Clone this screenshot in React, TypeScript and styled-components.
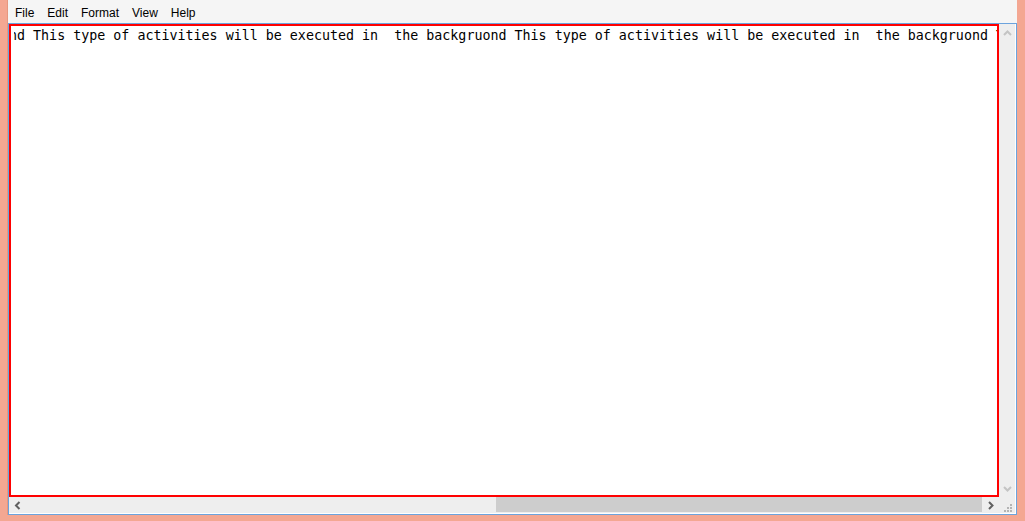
import React from 'react';
import styled, { createGlobalStyle } from 'styled-components';

const GlobalStyle = createGlobalStyle`
    html, body {
        margin: 0;
        padding: 0;
        background: #f4a792;
    }
`;

const LINE = 'This type of activities will be executed in  the backgruond ';

const Frame = styled.div`
    width: 1025px;
    height: 521px;
    box-sizing: border-box;
    padding: 0 8px 6px 7px;
    background: #f4a792;
    display: flex;
    overflow: hidden;
`;

const Window = styled.div`
    flex: 1;
    display: flex;
    flex-direction: column;
    border-left: 1px solid #e6977f;
    background: #f5f5f5;
`;

const MenuBar = styled.div`
    height: 23px;
    box-sizing: border-box;
    padding: 3px 0 0 0;
    display: flex;
    font-family: 'Liberation Sans', Arial, sans-serif;
    font-size: 12px;
    line-height: 20px;
    color: #000;
`;

const MenuItem = styled.span`
    padding: 0 6.5px;
    &:first-child {
        padding-left: 7px;
    }
`;

const EditorFrame = styled.div`
    flex: 1;
    display: grid;
    grid-template-columns: 990px 17px;
    grid-template-rows: 473px 17px;
    border: 1px solid #6ca3dd;
    background: #fff;
`;

const EditArea = styled.div`
    box-sizing: border-box;
    border: 2px solid #ff0000;
    background: #fff;
    padding: 2px 0 0 3px;
    overflow: hidden;
`;

const Viewport = styled.div`
    overflow: hidden;
    height: 100%;
`;

const TextLine = styled.div`
    margin-left: -5px;
    white-space: pre;
    font-family: 'DejaVu Sans Mono', 'Liberation Mono', monospace;
    font-size: 13.33px;
    line-height: 16px;
    color: #000;
`;

const VScroll = styled.div`
    background: #eeeeee;
    border-right: 1px solid #fff;
    display: flex;
    flex-direction: column;
    justify-content: space-between;
`;

const HScroll = styled.div`
    background: #eeeeee;
    border-bottom: 1px solid #fff;
    display: flex;
`;

const ArrowButton = styled.div<{ $w?: number; $h?: number }>`
    width: ${p => p.$w ?? 16}px;
    height: ${p => p.$h ?? 16}px;
    flex: none;
    display: flex;
    align-items: center;
    justify-content: center;
`;

const Track = styled.div`
    flex: 1;
    display: flex;
    justify-content: flex-end;
`;

const Thumb = styled.div`
    width: 486px;
    height: 15px;
    background: #cdcdcd;
`;

const Corner = styled.div`
    background: #eeeeee;
    border-right: 1px solid #fff;
    border-bottom: 1px solid #fff;
    position: relative;
`;

const Chevron: React.FC<{ dir: 'up' | 'down' | 'left' | 'right'; color: string }> = ({ dir, color }) => {
    const paths = {
        up: 'M1 6 L4.5 2.5 L8 6',
        down: 'M1 2 L4.5 5.5 L8 2',
        left: 'M5.5 1 L2 4.5 L5.5 8',
        right: 'M2 1 L5.5 4.5 L2 8',
    };
    const vertical = dir === 'up' || dir === 'down';
    return (
        <svg width={vertical ? 9 : 7} height={vertical ? 8 : 9} viewBox={vertical ? '0 0 9 8' : '0 0 7 9'}>
            <path d={paths[dir]} fill="none" stroke={color} strokeWidth={2} />
        </svg>
    );
};

const Grip = () => (
    <svg width="17" height="17" viewBox="0 0 17 17" style={{ position: 'absolute', left: 0, top: 0 }}>
        {[
            [10, 6],
            [7, 9], [10, 9],
            [4, 12], [7, 12], [10, 12],
        ].map(([x, y], i) => (
            <rect key={i} x={x + 1} y={y + 1} width={2} height={2} fill="#b4b4b4" />
        ))}
    </svg>
);

export default function App() {
    return (
        <>
            <GlobalStyle />
            <Frame>
                <Window>
                    <MenuBar>
                        <MenuItem>File</MenuItem>
                        <MenuItem>Edit</MenuItem>
                        <MenuItem>Format</MenuItem>
                        <MenuItem>View</MenuItem>
                        <MenuItem>Help</MenuItem>
                    </MenuBar>
                    <EditorFrame>
                        <EditArea>
                            <Viewport>
                                <TextLine>{'nd ' + LINE + LINE + LINE}</TextLine>
                            </Viewport>
                        </EditArea>
                        <VScroll>
                            <ArrowButton $w={16} $h={17}>
                                <Chevron dir="up" color="#c4c4c4" />
                            </ArrowButton>
                            <ArrowButton $w={16} $h={17}>
                                <Chevron dir="down" color="#c4c4c4" />
                            </ArrowButton>
                        </VScroll>
                        <HScroll>
                            <ArrowButton $w={17} $h={16}>
                                <Chevron dir="left" color="#606060" />
                            </ArrowButton>
                            <Track>
                                <Thumb />
                            </Track>
                            <ArrowButton $w={17} $h={16}>
                                <Chevron dir="right" color="#606060" />
                            </ArrowButton>
                        </HScroll>
                        <Corner>
                            <Grip />
                        </Corner>
                    </EditorFrame>
                </Window>
            </Frame>
        </>
    );
}
